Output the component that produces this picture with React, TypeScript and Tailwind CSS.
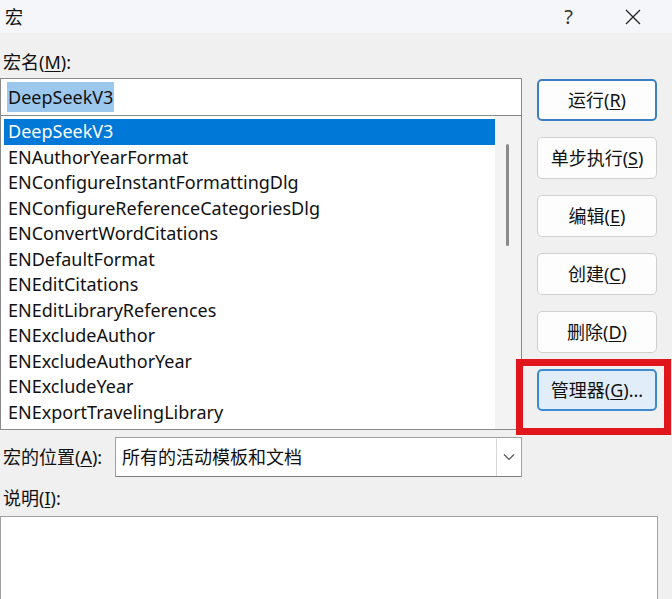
import React from "react";

const macros = [
  "DeepSeekV3",
  "ENAuthorYearFormat",
  "ENConfigureInstantFormattingDlg",
  "ENConfigureReferenceCategoriesDlg",
  "ENConvertWordCitations",
  "ENDefaultFormat",
  "ENEditCitations",
  "ENEditLibraryReferences",
  "ENExcludeAuthor",
  "ENExcludeAuthorYear",
  "ENExcludeYear",
  "ENExportTravelingLibrary",
];

const buttons = [
  { label: "运行", key: "R", tail: "", kind: "default" },
  { label: "单步执行", key: "S", tail: "", kind: "normal" },
  { label: "编辑", key: "E", tail: "", kind: "normal" },
  { label: "创建", key: "C", tail: "", kind: "normal" },
  { label: "删除", key: "D", tail: "", kind: "normal" },
  { label: "管理器", key: "G", tail: "...", kind: "hover" },
];

function Mnemonic({ label, k, tail = "" }: { label: string; k: string; tail?: string }) {
  return (
    <span>
      {label}(<span className="underline underline-offset-2">{k}</span>){tail}
    </span>
  );
}

export default function App() {
  return (
    <div
      className="relative h-[599px] w-[672px] overflow-hidden bg-[#f0f0f0] text-[18px] text-[#111]"
      style={{ fontFamily: '"Noto Sans", "Noto Sans CJK SC", sans-serif' }}
    >
      {/* title bar */}
      <div className="flex h-[33px] items-center bg-[#f4f6f9] pl-[5px]">
        <span className="leading-none">宏</span>
        <span className="ml-auto text-[20px] leading-none text-[#333]">?</span>
        <svg className="ml-[52px] mr-[31px]" width="16" height="16" viewBox="0 0 16 16">
          <path d="M1 1 L15 15 M15 1 L1 15" stroke="#222" strokeWidth="1.3" />
        </svg>
      </div>

      <div className="flex">
        {/* left column */}
        <div className="w-[522px]">
          <div className="mt-[17px] h-[28px] pl-[3px] leading-[24px]">
            <Mnemonic label="宏名" k="M" />:
          </div>

          <div className="flex h-[38px] items-center border border-[#8a8a8a] bg-white pl-[6px]">
            <span className="bg-[#9dc8ee] px-[1px] leading-[30px]">DeepSeekV3</span>
          </div>

          <div className="flex h-[314px] border border-t-0 border-[#8a8a8a] bg-white">
            <div className="flex-1 pl-[3px] pt-[3px]">
              {macros.map((m, i) => (
                <div
                  key={m}
                  className={`h-[25.5px] pl-[4px] leading-[25px] whitespace-nowrap ${
                    i === 0 ? "bg-[#0078d7] text-white" : ""
                  }`}
                >
                  {m}
                </div>
              ))}
            </div>
            <div className="w-[26px] bg-[#f3f3f3] pt-[28px]">
              <div className="ml-[11px] h-[102px] w-[3px] rounded-full bg-[#8a8a8a]" />
            </div>
          </div>

          <div className="mt-[7px] flex h-[40px] items-center">
            <span className="w-[115px] pl-[3px]">
              <Mnemonic label="宏的位置" k="A" />:
            </span>
            <div className="flex h-full flex-1 items-center border border-[#a0a0a0] border-b-[#808080] bg-white">
              <span className="flex-1 pl-[6px]">所有的活动模板和文档</span>
              <div className="flex h-full w-[25px] items-center justify-center border-l border-[#d8d8d8]">
                <svg width="12" height="8" viewBox="0 0 12 8">
                  <path d="M1 1.5 L6 6.5 L11 1.5" fill="none" stroke="#555" strokeWidth="1.2" />
                </svg>
              </div>
            </div>
          </div>
        </div>

        {/* right column of buttons */}
        <div className="ml-[15px] mt-[46px] flex w-[120px] flex-col gap-[16px]">
          {buttons.map((b) => (
            <div
              key={b.key}
              className={`flex h-[42px] items-center justify-center rounded-[5px] ${
                b.kind === "default"
                  ? "border-2 border-[#3d7fc6] bg-[#fdfdfd]"
                  : b.kind === "hover"
                    ? "border-2 border-[#3d8ad3] bg-[#e1eefa]"
                    : "border border-[#d0d0d0] bg-[#fdfdfd]"
              }`}
            >
              <Mnemonic label={b.label} k={b.key} tail={b.tail} />
            </div>
          ))}
        </div>
      </div>

      <div className="mt-[9px] h-[30px] pl-[3px] leading-[24px]">
        <Mnemonic label="说明" k="I" />:
      </div>
      <div className="h-[100px] w-[658px] border border-[#a0a0a0] bg-white" />

      {/* red highlight annotation */}
      <div className="absolute left-[516px] top-[359px] h-[76px] w-[155px] border-[7px] border-[#e0161c]" />
    </div>
  );
}
